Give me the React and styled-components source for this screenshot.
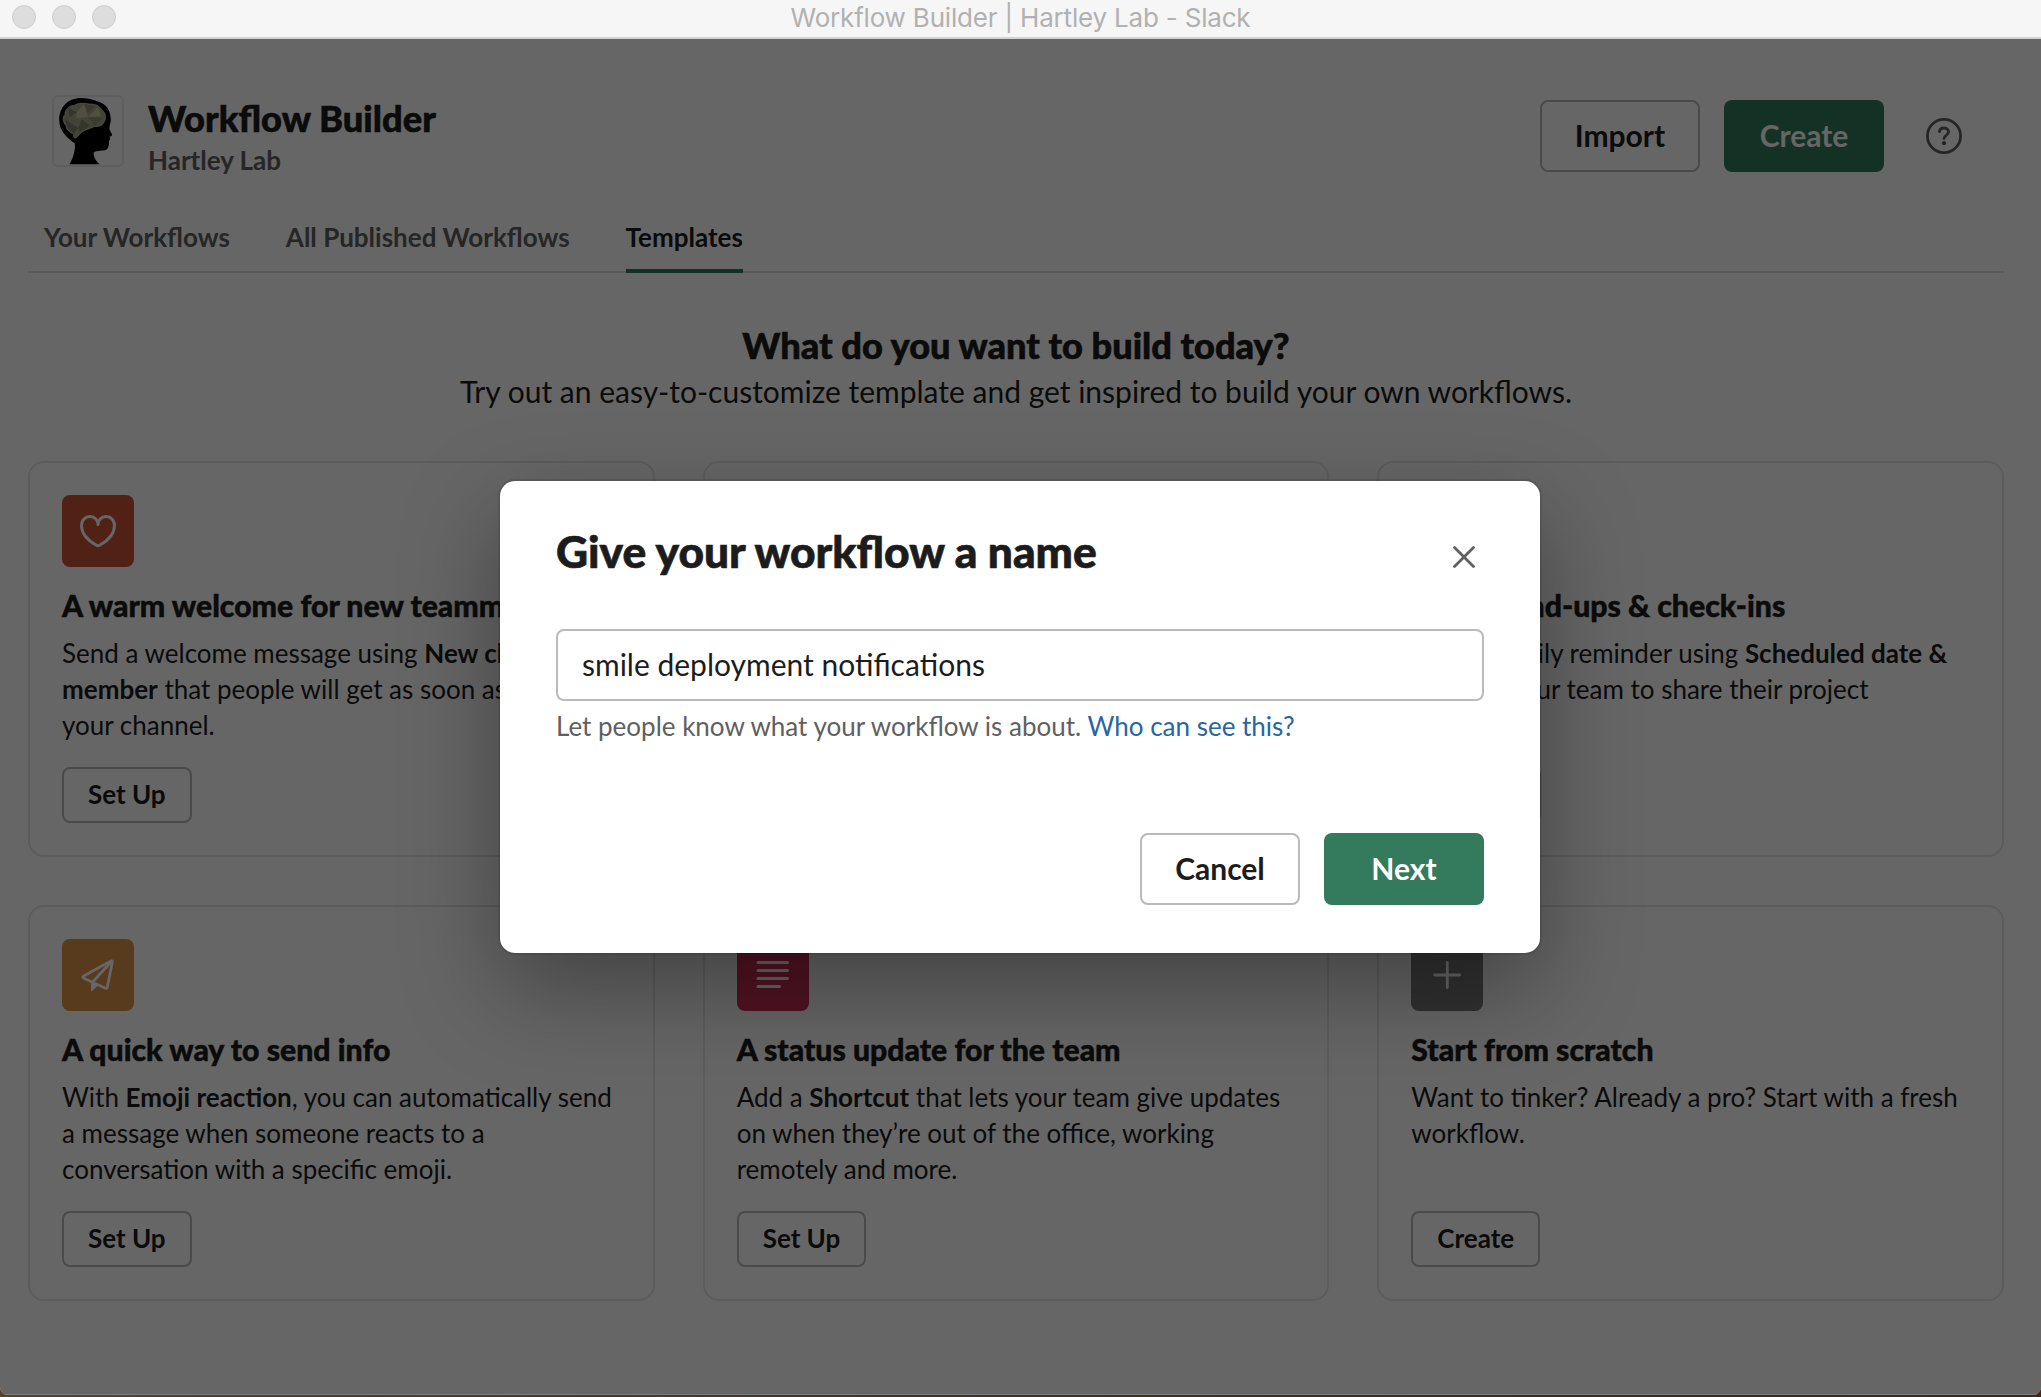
import React from "react";
import styled, { createGlobalStyle } from "styled-components";

const GlobalStyle = createGlobalStyle`
  *, *::before, *::after { box-sizing: border-box; }
  html, body { margin: 0; padding: 0; }
  body {
    width: 2041px;
    height: 1397px;
    overflow: hidden;
    background: linear-gradient(90deg, #5c4024, #4a2f18 50%, #44270f);
    font-family: Lato, "Liberation Sans", sans-serif;
    color: #1d1c1d;
  }
`;

const Window = styled.div`
  width: 2041px;
  height: 1395px;
  display: flex;
  flex-direction: column;
  border-radius: 0 0 8px 8px;
  overflow: hidden;
`;

const TitleBar = styled.header`
  height: 39px;
  flex: none;
  display: grid;
  grid-template-columns: 1fr auto 1fr;
  align-items: start;
  padding: 0 12px;
  background: #f6f6f6;
  border-bottom: 2px solid #d3d5d4;
`;

const Lights = styled.div`
  display: flex;
  gap: 16px;
  padding-top: 5px;
`;

const Light = styled.span`
  width: 24px;
  height: 24px;
  border-radius: 50%;
  background: #dddddd;
  border: 1px solid #cfcfcf;
`;

const WindowTitle = styled.div`
  font-family: Inter, sans-serif;
  font-size: 26px;
  line-height: 36px;
  letter-spacing: -0.19px;
  color: #b1b1b1;
`;

const Page = styled.div`
  flex: 1;
  position: relative;
  background: #fff;
  padding: 56px 37px 0 28px;
`;

const Header = styled.div`
  display: flex;
  align-items: flex-start;
  height: 104px;
  padding: 0 40px 0 24px;
`;

const Logo = styled.div`
  width: 72px;
  height: 72px;
  border: 2px solid #ececec;
  border-radius: 6px;
  svg { display: block; }
`;

const Names = styled.div`
  margin: -1px 0 0 24px;
  flex: 1;
`;

const AppName = styled.h1`
  margin: 0;
  font-size: 36.3px;
  font-weight: 900;
  line-height: 48px;
  -webkit-text-stroke: 0.6px currentColor;
`;

const TeamName = styled.div`
  font-size: 26px;
  font-weight: 700;
  line-height: 36px;
  color: #616061;
`;

const Actions = styled.div`
  display: flex;
  align-items: center;
  gap: 24px;
  padding-top: 5px;
`;

const Button = styled.button`
  display: flex;
  align-items: center;
  justify-content: center;
  font-family: inherit;
  font-weight: 700;
  margin: 0;
  padding: ${(p) => (p.$small ? "0 24px 2px" : "0 0 2px")};
  border-radius: 8px;
  width: ${(p) => (p.$small ? "auto" : "160px")};
  height: ${(p) => (p.$small ? "56px" : "72px")};
  font-size: ${(p) => (p.$small ? "26px" : "30px")};
  color: ${(p) => (p.$primary ? "#fff" : "#1d1c1d")};
  background: ${(p) => (p.$primary ? "#347a5c" : "#fff")};
  border: ${(p) => (p.$primary ? "none" : "2px solid #bababa")};
`;

const HelpIcon = styled.svg`
  display: block;
  margin-left: 16px;
`;

const Tabs = styled.nav`
  display: flex;
  gap: 56px;
  height: 74px;
  padding-left: 16px;
  box-shadow: inset 0 -2px #dddddd;
`;

const Tab = styled.a`
  font-size: 26px;
  font-weight: 700;
  line-height: 36px;
  padding-top: 20px;
  color: ${(p) => (p.$active ? "#1d1c1d" : "#616061")};
  border-bottom: 4px solid ${(p) => (p.$active ? "#2d7a5d" : "transparent")};
`;

const Intro = styled.div`
  text-align: center;
  padding-top: 47px;
  height: 188px;
`;

const IntroTitle = styled.h2`
  margin: 0;
  font-size: 36.2px;
  font-weight: 900;
  line-height: 50px;
  -webkit-text-stroke: 0.6px currentColor;
`;

const IntroText = styled.p`
  margin: 0;
  font-size: 30px;
  line-height: 42px;
`;

const Grid = styled.div`
  display: grid;
  grid-template-columns: repeat(3, 1fr);
  grid-auto-rows: 396px;
  gap: 48px;
`;

const Card = styled.article`
  display: flex;
  flex-direction: column;
  align-items: flex-start;
  padding: 32px;
  border: 2px solid #e6e6e6;
  border-radius: 16px;
`;

const CardIcon = styled.div`
  width: 72px;
  height: 72px;
  flex: none;
  border-radius: 8px;
  background: ${(p) => p.$color};
  svg { display: block; }
`;

const CardTitle = styled.h3`
  margin: 16px 0 8px;
  font-size: 30.2px;
  font-weight: 900;
  line-height: 44px;
  white-space: nowrap;
  -webkit-text-stroke: 0.5px currentColor;
`;

const CardText = styled.p`
  margin: 0 0 auto;
  font-size: 26px;
  line-height: 36px;
`;

const Overlay = styled.div`
  position: absolute;
  inset: 0;
  display: flex;
  align-items: flex-start;
  justify-content: center;
  padding: 442px 1px 0 0;
  background: rgba(0, 0, 0, 0.6);
  box-shadow: inset 0 -1px rgba(255, 255, 255, 0.15);
`;

const Dialog = styled.section`
  width: 1040px;
  height: 472px;
  display: flex;
  flex-direction: column;
  padding: 48px 56px;
  background: #fff;
  border-radius: 15px;
  box-shadow: 0 0 0 2px rgba(29, 28, 29, 0.13), 0 36px 96px rgba(0, 0, 0, 0.35);
`;

const DialogHeader = styled.div`
  display: flex;
  justify-content: space-between;
  height: 100px;
  padding-right: 9px;
`;

const DialogTitle = styled.h2`
  margin: -2px 0 0;
  font-size: 44.3px;
  font-weight: 900;
  line-height: 47px;
  -webkit-text-stroke: 0.7px currentColor;
`;

const CloseIcon = styled.svg`
  display: block;
  margin-top: 17px;
`;

const NameInput = styled.input`
  width: 100%;
  height: 72px;
  padding: 0 24px 3px;
  border: 2px solid #bababa;
  border-radius: 8px;
  background: #fff;
  color: #1d1c1d;
  font-family: inherit;
  font-size: 30px;
  outline: none;
`;

const Hint = styled.p`
  margin: 7px 0 0;
  font-size: 26px;
  line-height: 36px;
  color: #616061;
`;

const HintLink = styled.a`
  color: #2765a3;
`;

const DialogActions = styled.div`
  margin-top: auto;
  display: flex;
  justify-content: flex-end;
  gap: 24px;
`;

function BrainLogo() {
  return (
    <svg width="68" height="68" viewBox="54 97 68 68">
      <path
        fill="#000"
        d="M69.5 164.300C73 158 75.600 151 74.800 143.500C67 138 59.200 131 59.200 120C59.200 107 68 98 81 98C88 98 93 99.300 97 101.300C106 103.500 110.800 110 110.800 120C110.800 123 109.200 126 109.400 128.500C109.600 131 112.400 133.500 112 135.200C111.700 136.300 110 136 109.800 137C109.700 138 110.600 138.500 110 139.500C109.500 140.300 109 140.600 109 141.500C109.100 144 108.800 149.500 105 150.300C101 151 95 150.500 93.500 153C93.500 157 96 161 99.500 164.300Z"
      />
      <path
        fill="#a8a78a"
        stroke="#d0d0c4"
        strokeWidth="0.8"
        d="M75 138C73.500 137.500 72.700 135.500 74 134C69 132.500 66 129 66 125.500C62.500 122 62.500 117.500 65 114.500C64.500 110.500 68.500 105.500 74 105.500C78 102.500 85 103 89 104C95 103.500 100 106.500 101.500 109.500C105.500 112 106.500 118 104.500 121C103.500 125 99 127 94.500 126.500C90 128.500 84 130 80.500 133C78.500 135 77.500 137.500 75 138Z"
      />
      <path fill="#828871" d="M65 119L78 128L74 134L67 127ZM78 128L82 119L90 126L80 132ZM68 108L77 112L70 117Z" />
      <path fill="#c9c6a2" d="M77 112L84 104L88 117L76 118ZM88 117L98 107L101 116Z" />
      <path fill="#90937a" d="M84 104L96 106L88 113ZM88 117L102 118L95 126Z" />
    </svg>
  );
}

const iconProps = {
  width: 72,
  height: 72,
  viewBox: "0 0 72 72",
  fill: "none",
  stroke: "#fff",
  strokeWidth: 3,
  strokeLinecap: "round",
  strokeLinejoin: "round",
};

const icons = {
  heart: (
    <svg {...iconProps}>
      <path d="M36 29.500C36 25 32.500 21.500 28 21.500C23.300 21.500 19.500 25 19.500 30.500C19.500 39 27 46 34 50C35.300 50.800 36.700 50.800 38 50C45 46 52.500 39 52.500 30.500C52.500 25 48.700 21.500 44 21.500C39.500 21.500 36 25 36 29.500Z" />
    </svg>
  ),
  clock: (
    <svg {...iconProps}>
      <circle cx="36" cy="36" r="16" />
      <path d="M36 26V36L43 41" />
    </svg>
  ),
  chat: (
    <svg {...iconProps}>
      <path d="M20 22H52V44H34L26 51V44H20Z" />
    </svg>
  ),
  send: (
    <svg {...iconProps} strokeWidth={2.8}>
      <path d="M49 21.900L21.300 37.300C20.500 37.900 20.500 38.600 21.400 39.100L43.400 49.200C44.400 49.600 45.100 49.200 45.300 48.300L50.300 22.900C50.400 22 49.800 21.500 49 21.900Z" />
      <path d="M49.800 22.300L30.500 43" />
      <path fill="#fff" strokeWidth="1.6" d="M29.800 43.200V51.200L35.300 46.200Z" />
    </svg>
  ),
  lines: (
    <svg {...iconProps}>
      <path d="M21 23.500H50.500M21 31.500H50.500M21 39.500H50.500M21 47.500H42.500" />
    </svg>
  ),
  plus: (
    <svg {...iconProps} strokeWidth={2.8}>
      <path d="M36.300 23.500V48.500M23.800 36H48.800" />
    </svg>
  ),
};

const cards = [
  {
    icon: "heart",
    color: "#cb5339",
    title: "A warm welcome for new teammates",
    text: (
      <>
        Send a welcome message using <b>New channel member</b> that people will get as soon as they join your channel.
      </>
    ),
    action: "Set Up",
  },
  {
    icon: "chat",
    color: "#4a9fd8",
    title: "A form to standardize requests",
    text: (
      <>
        Use a <b>Shortcut</b> to gather requests from your team in a single channel.
      </>
    ),
    action: "Set Up",
  },
  {
    icon: "clock",
    color: "#347a5c",
    title: "Daily stand-ups & check-ins",
    text: (
      <>
        Set up a daily reminder using <b>Scheduled date &amp; time</b> for your team to share their project updates.
      </>
    ),
    action: "Set Up",
  },
  {
    icon: "send",
    color: "#dc9346",
    title: "A quick way to send info",
    text: (
      <>
        With <b>Emoji reaction</b>, you can automatically send a message when someone reacts to a conversation with a
        specific emoji.
      </>
    ),
    action: "Set Up",
  },
  {
    icon: "lines",
    color: "#cc3058",
    title: "A status update for the team",
    text: (
      <>
        Add a <b>Shortcut</b> that lets your team give updates on when they’re out of the office, working remotely and
        more.
      </>
    ),
    action: "Set Up",
  },
  {
    icon: "plus",
    color: "#7b7b7b",
    title: "Start from scratch",
    text: "Want to tinker? Already a pro? Start with a fresh workflow.",
    action: "Create",
  },
];

export default function App() {
  return (
    <>
      <GlobalStyle />
      <Window>
        <TitleBar>
          <Lights>
            <Light />
            <Light />
            <Light />
          </Lights>
          <WindowTitle>Workflow Builder | Hartley Lab - Slack</WindowTitle>
        </TitleBar>
        <Page>
          <Header>
            <Logo>
              <BrainLogo />
            </Logo>
            <Names>
              <AppName>Workflow Builder</AppName>
              <TeamName>Hartley Lab</TeamName>
            </Names>
            <Actions>
              <Button>Import</Button>
              <Button $primary>Create</Button>
              <HelpIcon width="40" height="40" viewBox="0 0 40 40" fill="none" stroke="#616061" strokeLinecap="round">
                <circle cx="20" cy="20" r="16.600" strokeWidth="2.800" />
                <path
                  strokeWidth="2.800"
                  d="M15.500 15.700C15.700 13.300 17.600 12 20 12C22.500 12 24.500 13.600 24.500 16C24.500 19.300 20 19.300 20 22.500"
                />
                <circle cx="20" cy="27.200" r="2.100" fill="#616061" stroke="none" />
              </HelpIcon>
            </Actions>
          </Header>
          <Tabs>
            <Tab>Your Workflows</Tab>
            <Tab>All Published Workflows</Tab>
            <Tab $active>Templates</Tab>
          </Tabs>
          <Intro>
            <IntroTitle>What do you want to build today?</IntroTitle>
            <IntroText>Try out an easy-to-customize template and get inspired to build your own workflows.</IntroText>
          </Intro>
          <Grid>
            {cards.map((card) => (
              <Card key={card.title}>
                <CardIcon $color={card.color}>{icons[card.icon]}</CardIcon>
                <CardTitle>{card.title}</CardTitle>
                <CardText>{card.text}</CardText>
                <Button $small>{card.action}</Button>
              </Card>
            ))}
          </Grid>
          <Overlay>
            <Dialog>
              <DialogHeader>
                <DialogTitle>Give your workflow a name</DialogTitle>
                <CloseIcon width="22" height="22" viewBox="0 0 22 22" stroke="#616061" strokeWidth="2.800" strokeLinecap="round">
                  <path d="M1.500 1.500L20.500 20.500M20.500 1.500L1.500 20.500" />
                </CloseIcon>
              </DialogHeader>
              <NameInput defaultValue="smile deployment notifications" />
              <Hint>
                Let people know what your workflow is about. <HintLink>Who can see this?</HintLink>
              </Hint>
              <DialogActions>
                <Button>Cancel</Button>
                <Button $primary>Next</Button>
              </DialogActions>
            </Dialog>
          </Overlay>
        </Page>
      </Window>
    </>
  );
}
